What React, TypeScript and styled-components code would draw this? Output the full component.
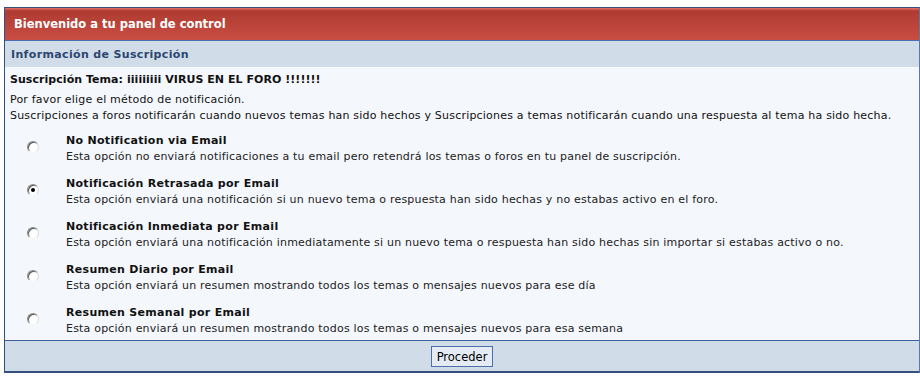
import React from 'react';
import styled, { createGlobalStyle } from 'styled-components';

type Option = {
  title: string;
  desc: string;
  checked?: boolean;
};

const options: Option[] = [
  {
    title: 'No Notification via Email',
    desc: 'Esta opción no enviará notificaciones a tu email pero retendrá los temas o foros en tu panel de suscripción.',
  },
  {
    title: 'Notificación Retrasada por Email',
    desc: 'Esta opción enviará una notificación si un nuevo tema o respuesta han sido hechas y no estabas activo en el foro.',
    checked: true,
  },
  {
    title: 'Notificación Inmediata por Email',
    desc: 'Esta opción enviará una notificación inmediatamente si un nuevo tema o respuesta han sido hechas sin importar si estabas activo o no.',
  },
  {
    title: 'Resumen Diario por Email',
    desc: 'Esta opción enviará un resumen mostrando todos los temas o mensajes nuevos para ese día',
  },
  {
    title: 'Resumen Semanal por Email',
    desc: 'Esta opción enviará un resumen mostrando todos los temas o mensajes nuevos para esa semana',
  },
];

const GlobalStyle = createGlobalStyle`
  body {
    margin: 0;
    background: #fff;
    font-family: "DejaVu Sans", Verdana, sans-serif;
    font-size: 11px;
    color: #111;
  }
`;

const Panel = styled.div`
  margin: 7px 0 0 4px;
  width: 914px;
  border: 1px solid #34507f;
  border-right-color: #5b76a8;
`;

const Header = styled.div`
  height: 33px;
  box-sizing: border-box;
  padding: 0 0 0 9px;
  display: flex;
  align-items: center;
  background: linear-gradient(#e27a6f 0, #d5594e 1px, #ae3c33 3px, #b94238 14px, #c94d43 100%);
  border-bottom: 1px solid #4a6fb0;
  color: #fff;
  font-weight: bold;
  font-size: 11.5px;
`;

const SubHeader = styled.div`
  height: 26px;
  box-sizing: border-box;
  padding: 0 0 0 6px;
  display: flex;
  align-items: center;
  background: #d1dce9;
  color: #2d4770;
  font-weight: bold;
  font-size: 11px;
  letter-spacing: 0.35px;
`;

const Body = styled.div`
  background: #f4f7fc;
  padding: 5px 0 3px 5px;
  border-bottom: 1px solid #3f5f99;
  line-height: 16px;
`;

const Line = styled.div<{ $bold?: boolean }>`
  font-weight: ${(p) => (p.$bold ? 'bold' : 'normal')};
  margin-bottom: ${(p) => (p.$bold ? '4px' : '0')};
  letter-spacing: ${(p) => (p.$bold ? '0.05px' : '0.2px')};
  color: #111;
  white-space: nowrap;
`;

const Options = styled.div`
  display: flex;
  flex-direction: column;
  gap: 11px;
  margin-top: 9px;
`;

const OptionRow = styled.div`
  display: grid;
  grid-template-columns: 56px 1fr;
  align-items: center;
`;

const RadioCell = styled.div`
  display: flex;
  padding: 0 0 5px 17px;
`;

const Radio = styled.span<{ $checked?: boolean }>`
  width: 10px;
  height: 10px;
  border-radius: 50%;
  border: 1px solid;
  border-color: #8a8a8a #dadada #f4f4f4 #8a8a8a;
  box-shadow: inset 1px 1px 0 #5a5a5a;
  background: #fff;
  display: flex;
  align-items: center;
  justify-content: center;

  &::after {
    content: '';
    width: 4px;
    height: 4px;
    border-radius: 50%;
    background: ${(p) => (p.$checked ? '#000' : 'transparent')};
  }
`;

const OptionTitle = styled.div`
  font-weight: bold;
  color: #111;
  white-space: nowrap;
  letter-spacing: 0.3px;
`;

const OptionDesc = styled.div`
  color: #222;
  white-space: nowrap;
  letter-spacing: 0.2px;
`;

const Footer = styled.div`
  height: 30px;
  background: #d1dce9;
  border-bottom: 1px solid #34507f;
  display: flex;
  align-items: center;
  justify-content: center;
`;

const Button = styled.button`
  font-family: "DejaVu Sans", Verdana, sans-serif;
  font-size: 11.5px;
  color: #000;
  height: 21px;
  padding: 0 5px;
  background: #e4ebf5;
  border: 1px solid #4f6fa8;
  margin-top: 1px;
`;

const App = () => {
  return (
    <>
      <GlobalStyle />
      <Panel>
        <Header>Bienvenido a tu panel de control</Header>
        <SubHeader>Información de Suscripción</SubHeader>
        <Body>
          <Line $bold>Suscripción Tema: iiiiiiiii VIRUS EN EL FORO !!!!!!!</Line>
          <Line>Por favor elige el método de notificación.</Line>
          <Line>
            Suscripciones a foros notificarán cuando nuevos temas han sido hechos y Suscripciones a temas notificarán cuando una respuesta al tema ha sido hecha.
          </Line>
          <Options>
            {options.map((o) => (
              <OptionRow key={o.title}>
                <RadioCell>
                  <Radio $checked={o.checked} />
                </RadioCell>
                <div>
                  <OptionTitle>{o.title}</OptionTitle>
                  <OptionDesc>{o.desc}</OptionDesc>
                </div>
              </OptionRow>
            ))}
          </Options>
        </Body>
        <Footer>
          <Button>Proceder</Button>
        </Footer>
      </Panel>
    </>
  );
};

export default App;
